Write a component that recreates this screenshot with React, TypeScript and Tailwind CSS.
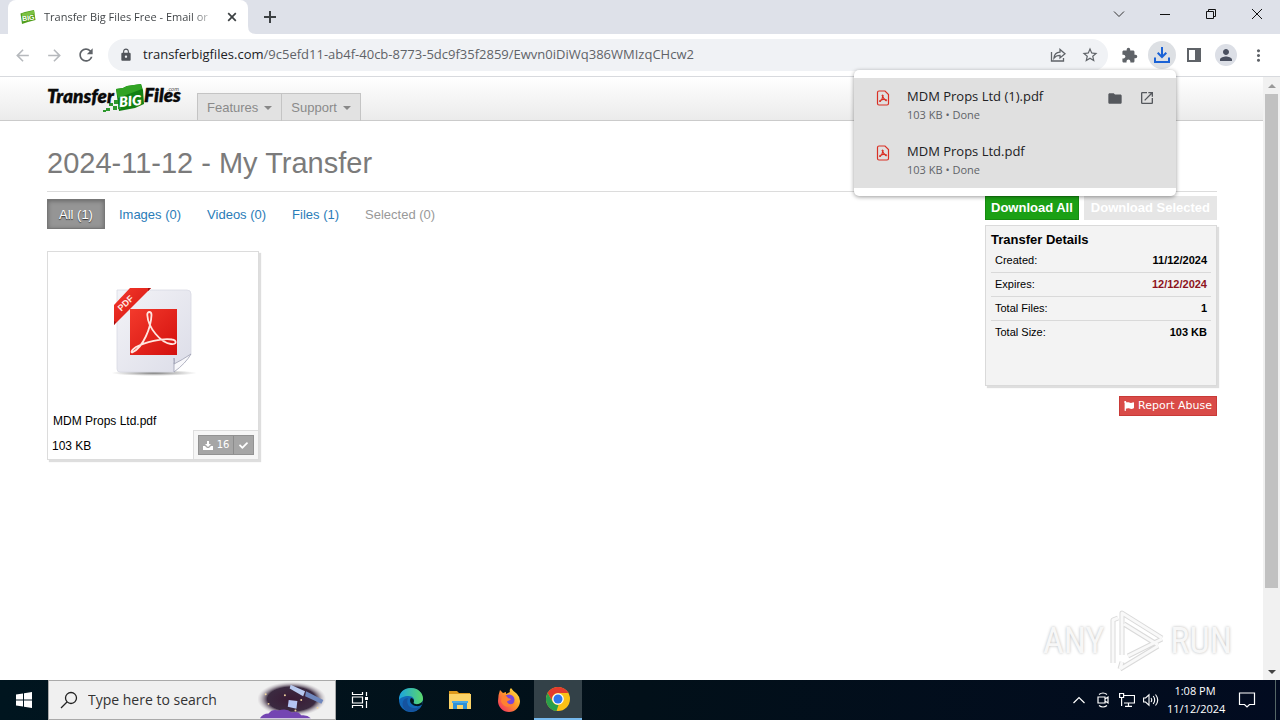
import type { ReactNode } from 'react';
import { FaCheck, FaFlag } from 'react-icons/fa';
import {
  MdArrowBack,
  MdArrowForward,
  MdExtension,
  MdFolder,
  MdLock,
  MdMoreVert,
  MdOpenInNew,
  MdPerson,
  MdRefresh,
  MdStarBorder,
} from 'react-icons/md';

const ui = "font-['Open_Sans','Noto_Sans',sans-serif]";

function IconButton({ label, children, className = '' }: { label: string; children: ReactNode; className?: string }) {
  return (
    <button type="button" aria-label={label} className={`flex shrink-0 items-center justify-center ${className}`}>
      {children}
    </button>
  );
}

function BigBadge() {
  return (
    <svg viewBox="0 0 16 16" className="size-4 shrink-0" aria-hidden="true">
      <path d="M0.500 4.500 L5 3 L14 1 L15.500 11 L8 13 L2 15 Z" fill="#4f9e1c" />
      <path d="M2 4.500 L14 1.500 L14.600 5 L2 8 Z" fill="#7cc142" />
      <text x="2" y="11.500" fontSize="7" fontWeight="700" fill="#fff" fontFamily="Liberation Sans, sans-serif" transform="rotate(-8 8 9)">BIG</text>
    </svg>
  );
}

function TabStrip() {
  return (
    <div className="flex h-[34px] shrink-0 items-end bg-[#dee1e9]">
      <div className="ml-2 flex h-[34px] w-60 items-center rounded-t-lg bg-white pr-2 pl-3">
        <BigBadge />
        <span className="ml-2 bg-linear-to-r from-[#3c4043] from-90% to-[#3c404355] bg-clip-text text-[11px] whitespace-nowrap text-transparent">
          Transfer Big Files Free - Email or
        </span>
        <IconButton label="Close tab" className="ml-auto size-4">
          <svg viewBox="0 0 16 16" className="size-4" stroke="#3c4043" strokeWidth="1.7"><path d="M4.2 4.2l7.6 7.6M11.8 4.2l-7.6 7.6" /></svg>
        </IconButton>
      </div>
      <svg viewBox="0 0 8 8" className="size-2" aria-hidden="true"><path d="M0 0Q0 8 8 8H0Z" fill="#fff" /></svg>
      <IconButton label="New tab" className="ml-1 h-[34px] w-[20px]">
        <svg viewBox="0 0 16 16" className="size-4" stroke="#3c4043" strokeWidth="2"><path d="M8 2v12M2 8h12" /></svg>
      </IconButton>
      <div className="ml-auto flex h-[34px] items-start">
        <IconButton label="Search tabs" className="h-7 w-[46px]">
          <svg viewBox="0 0 12 12" className="size-3" fill="none" stroke="#333"><path d="M1 3.5l5 5 5-5" /></svg>
        </IconButton>
        <IconButton label="Minimize" className="h-7 w-[46px]">
          <svg viewBox="0 0 12 12" className="size-3" stroke="#111"><path d="M1 6.500h10" /></svg>
        </IconButton>
        <IconButton label="Restore" className="h-7 w-[46px]">
          <svg viewBox="0 0 12 12" className="size-3" fill="none" stroke="#111"><path d="M1.500 3.500h7v7h-7zM3.500 3V1.500h7v7H9" /></svg>
        </IconButton>
        <IconButton label="Close" className="h-7 w-[46px]">
          <svg viewBox="0 0 12 12" className="size-3" stroke="#111"><path d="M1 1l10 10M11 1L1 11" /></svg>
        </IconButton>
      </div>
    </div>
  );
}

function Toolbar() {
  return (
    <div className="flex h-[43px] shrink-0 items-center border-b border-[#d8dade] bg-white text-[#5f6368]">
      <div className="flex items-center gap-3 pl-3">
        <IconButton label="Back" className="size-5 text-[#b6b9bd]"><MdArrowBack size={19} /></IconButton>
        <IconButton label="Forward" className="size-5 text-[#b6b9bd]"><MdArrowForward size={19} /></IconButton>
        <IconButton label="Reload" className="size-5"><MdRefresh size={20} /></IconButton>
      </div>
      <div className="ml-3 flex h-8 grow items-center rounded-full bg-[#f0f2f5] pr-2 pl-[11px]">
        <MdLock size={14} className="mr-[10px] shrink-0 text-[#50545a]" />
        <div role="textbox" aria-label="Address" className="grow text-[13px] whitespace-nowrap text-[#5f6368]">
          <span className="text-[#202124]">transferbigfiles.com</span>/9c5efd11-ab4f-40cb-8773-5dc9f35f2859/Ewvn0iDiWq386WMIzqCHcw2
        </div>
        <IconButton label="Share" className="mr-3 size-5">
          <svg viewBox="0 0 16 16" className="size-4" fill="none" stroke="#5f6368" strokeWidth="1.3">
            <path d="M1.500 5v9h12v-3M4 11c.3-4 2.500-5.700 6-5.900V2.500L15 6.800l-5 4.100V8.300C7.300 8.300 5.500 9 4 11z" />
          </svg>
        </IconButton>
        <IconButton label="Bookmark this tab" className="size-5"><MdStarBorder size={18} /></IconButton>
      </div>
      <div className="flex items-center pr-3 pl-3">
        <IconButton label="Extensions" className="size-[18px]"><MdExtension size={17} /></IconButton>
        <IconButton label="Downloads" className="ml-[10px] size-7 rounded-full bg-[#dde0e4]">
          <svg viewBox="0 0 18 18" className="size-[18px]" fill="none" stroke="#1a62d6" strokeWidth="2">
            <path d="M9 1v9.500M4.700 6.700L9 11l4.300-4.300M2 11.500V16h14v-4.500" />
          </svg>
        </IconButton>
        <IconButton label="Side panel" className="ml-[9px] size-[18px]">
          <svg viewBox="0 0 16 16" className="size-4"><path d="M1 1h14v14H1zM3 3v10h6V3z" fill="#5f6368" fillRule="evenodd" /></svg>
        </IconButton>
        <IconButton label="Profile" className="ml-3 size-[22px] rounded-full bg-[#dcdfe6] text-[#4a5060]"><MdPerson size={18} /></IconButton>
        <IconButton label="Menu" className="ml-[11px] size-5"><MdMoreVert size={19} /></IconButton>
      </div>
    </div>
  );
}

function PdfGlyph() {
  return (
    <svg viewBox="0 0 16 16" className="size-4 shrink-0" fill="none" stroke="#d93025" aria-hidden="true">
      <path d="M2.500 2.500a1.500 1.500 0 0 1 1.500-1.500h6l3.500 3.500v9A1.500 1.500 0 0 1 12 15H4a1.500 1.500 0 0 1-1.500-1.500z" strokeWidth="1.200" />
      <path d="M7.500 5.500C8 8 9 9.500 11.300 10.600M7.600 5.300C7.800 8 6.500 10.500 4.700 11.500M5.500 10.300C7.500 9.300 9.500 9.200 11.300 10" strokeWidth="1.200" />
      <circle cx="7.600" cy="5.600" r=".6" />
      <circle cx="5" cy="11.100" r=".6" />
      <circle cx="11.100" cy="10.300" r=".6" />
    </svg>
  );
}

function DownloadRow({ name, actions = false }: { name: string; actions?: boolean }) {
  return (
    <li className="flex h-[55px] items-start pt-[9px] pr-[21px] pl-[21px]">
      <span className="mt-[3px]"><PdfGlyph /></span>
      <div className="ml-4 grow">
        <p className="text-[13px] leading-[18px] text-[#202124]">{name}</p>
        <p className="text-[11px] leading-5 text-[#5f6368]">103 KB • Done</p>
      </div>
      {actions && (
        <div className="mt-[3px] flex gap-4 text-[#55585d]">
          <IconButton label="Show in folder" className="size-4"><MdFolder size={17} /></IconButton>
          <IconButton label="Open file" className="size-4"><MdOpenInNew size={16} /></IconButton>
        </div>
      )}
    </li>
  );
}

function DownloadsPopup() {
  return (
    <div className="absolute top-[70px] right-[104px] z-10 w-[322px] rounded-[5px] bg-white py-2 shadow-[0_1px_4px_rgba(0,0,0,0.4)]">
      <ul className="bg-[#e0e0e0]">
        <DownloadRow name="MDM Props Ltd (1).pdf" actions />
        <DownloadRow name="MDM Props Ltd.pdf" />
      </ul>
    </div>
  );
}

function SiteLogo() {
  return (
    <svg viewBox="0 0 136 32" className="h-8 w-[136px]" role="img" aria-label="TransferBigFiles.com">
      <path d="M69 9L76 8 80 6 94 4 96 10 97 24 88 28 72 31z" fill="#128012" />
      <path d="M69 9L76 8 80 6 94 4 95 9 71 18z" fill="#31a324" />
      <path d="M62 23h4v3h-4zM66 26h4v4h-4zM59 28h4v3h-4zM56 30h3v2h-3zM67 20h4v4h-4zM71 25h3v4h-3z" fill="#2d982d" />
      <g fontFamily="Lato, sans-serif" fontStyle="italic" fontWeight="800">
        <text x="0" y="23" fontSize="19" fill="#0b0b0b" stroke="#0b0b0b" strokeWidth=".3">Transfer</text>
        <text x="72" y="26" fontSize="14" fill="#fff" transform="rotate(-5 83 20)">BIG</text>
        <text x="97" y="22" fontSize="19" fill="#0b0b0b" stroke="#0b0b0b" strokeWidth=".3">Files</text>
        <text x="120" y="11" fontSize="6" fontWeight="400" fill="#555">.com</text>
      </g>
    </svg>
  );
}

function NavItem({ label }: { label: string }) {
  return (
    <button type="button" className="flex h-[27px] items-center gap-[6px] border-r border-[#c4c4c4] px-[9px] text-[13px] text-[#8a8a8a]">
      {label}
      <svg viewBox="0 0 8 4" className="h-1 w-2" aria-hidden="true"><path d="M0 0h8L4 4z" fill="#888" /></svg>
    </button>
  );
}

function PdfArtwork() {
  return (
    <svg viewBox="0 0 90 94" className="h-[94px] w-[90px]" role="img" aria-label="PDF document">
      <defs>
        <linearGradient id="sheet" x1="0" y1="0" x2="1" y2="1"><stop offset="0" stopColor="#f3f3f7" /><stop offset="1" stopColor="#dcdde8" /></linearGradient>
        <linearGradient id="red" x1="0" y1="0" x2="1" y2="1"><stop offset="0" stopColor="#f33a2c" /><stop offset="1" stopColor="#d3100e" /></linearGradient>
        <radialGradient id="shade"><stop offset="0" stopColor="#555" stopOpacity=".8" /><stop offset="1" stopColor="#777" stopOpacity="0" /></radialGradient>
      </defs>
      <ellipse cx="46" cy="87" rx="43" ry="3" fill="url(#shade)" />
      <path d="M9 4h70q4 0 4 4v60L66 86H12q-3 0-3-3z" fill="url(#sheet)" stroke="#d8d9e3" strokeWidth=".8" />
      <path d="M66 86V72q1 4 0 6 8-4 17-10-5 9-17 18z" fill="#f8f8fb" stroke="#9da0b2" strokeWidth=".8" />
      <rect x="22" y="23" width="47" height="46" fill="url(#red)" />
      <path d="M25 66C35 61 43 42 43.500 29c0-4-4.500-4-4.200 0C40 42 53 57 63 58c6 1 6-4 1-4.500C54 52 37 56 28 61c-6 4-5 6.500-3 5z" fill="none" stroke="#ffe6e0" strokeWidth="1.800" />
      <path d="M22 2h21L6 39V19z" fill="url(#red)" />
      <path d="M43 2l-3 3V2zM6 39v-4l2 1z" fill="#9f1010" />
      <text x="-1" y="0" fontFamily="Liberation Sans, sans-serif" fontSize="9" fontWeight="700" fill="#ffe9e4" transform="translate(14 25) rotate(-44)">PDF</text>
    </svg>
  );
}

function FileCard() {
  return (
    <article className="flex h-[209px] w-[212px] flex-col border border-[#dcdcdc] bg-white text-xs text-black shadow-[2px_2px_1px_#dedede]">
      <div className="flex grow justify-center pt-[34px]"><PdfArtwork /></div>
      <p className="px-[5px] pb-px leading-4">MDM Props Ltd.pdf</p>
      <div className="flex items-center justify-between pl-1">
        <span className="pt-[2px]">103 KB</span>
        <div className="border-t border-l border-[#dedede] bg-[#f6f6f6] p-1">
          <div className="flex h-5 border border-[#929292] bg-[#a6a6a6] font-['DejaVu_Sans',sans-serif] text-[10px] text-white">
            <button type="button" aria-label="Download, 16 downloads" className="flex w-[35px] items-center justify-center gap-1 border-r border-[#8c8c8c]">
              <svg viewBox="0 0 10 9" className="h-[9px] w-[10px]" fill="#fff"><path d="M4 0h2v3h2L5 6 2 3h2zM0 5h2l2 2h2l2-2h2v4H0z" /></svg>
              16
            </button>
            <button type="button" aria-label="Select file" className="flex w-[19px] items-center justify-center"><FaCheck size={9} /></button>
          </div>
        </div>
      </div>
    </article>
  );
}

const details = [
  { label: 'Created:', value: '11/12/2024', tone: 'text-black' },
  { label: 'Expires:', value: '12/12/2024', tone: 'text-[#8d1420]' },
  { label: 'Total Files:', value: '1', tone: 'text-black' },
  { label: 'Total Size:', value: '103 KB', tone: 'text-black' },
];

function TransferSidebar() {
  return (
    <aside className="flex w-[232px] shrink-0 flex-col pt-1">
      <div className="flex justify-between text-[13px] font-bold text-white">
        <button type="button" className="h-6 border border-[#168a10] bg-[#1ba015] px-[5px]">Download All</button>
        <button type="button" disabled className="h-6 bg-[#e6e6e6] px-[7px]">Download Selected</button>
      </div>
      <section className="mt-[5px] h-[161px] border border-[#dadada] bg-[#f3f3f3] px-[5px] pt-[6px] text-black shadow-[2px_2px_1px_#dedede]">
        <h2 className="text-[13px] leading-4 font-bold">Transfer Details</h2>
        <table className="w-full text-[11px]">
          <tbody>
            {details.map((row) => (
              <tr key={row.label} className="h-6 border-b border-[#d9d9d9] last:border-0">
                <th scope="row" className="px-1 py-0 text-left font-normal">{row.label}</th>
                <td className={`px-1 py-0 text-right font-bold ${row.tone}`}>{row.value}</td>
              </tr>
            ))}
          </tbody>
        </table>
      </section>
      <button type="button" className="mt-[10px] flex h-5 items-center gap-1 self-end border border-[#c93a37] bg-[#d94b48] px-1 font-['DejaVu_Sans',sans-serif] text-[11px] text-white">
        <FaFlag size={10} />
        Report Abuse
      </button>
    </aside>
  );
}

const filters = [
  { label: 'Images (0)', tone: 'text-[#2a7cb8]' },
  { label: 'Videos (0)', tone: 'text-[#2a7cb8]' },
  { label: 'Files (1)', tone: 'text-[#2a7cb8]' },
  { label: 'Selected (0)', tone: 'text-[#999]' },
];

function Watermark() {
  return (
    <div className="absolute right-[31px] bottom-[7px] flex items-center gap-[3px] font-['Roboto_Condensed','Liberation_Sans_Narrow','Liberation_Sans',sans-serif] text-[36px] leading-[64px] text-[#f7f7f7] [text-shadow:0_0_3px_#b8b8b8]">
      <span>ANY</span>
      <svg viewBox="0 0 60 64" className="h-16 w-[60px]" fill="none" strokeLinejoin="round" aria-hidden="true">
        <g stroke="#dadada" strokeWidth="5"><path d="M15 46V4l40 25M6 54V11l5-2M21 47l34-17M13 60l38-23M13 60l2-7M17 15l34 21" /></g>
        <g stroke="#f9f9f9" strokeWidth="3"><path d="M15 46V4l40 25M6 54V11l5-2M21 47l34-17M13 60l38-23M13 60l2-7M17 15l34 21" /></g>
      </svg>
      <span>RUN</span>
    </div>
  );
}

function WebPage() {
  return (
    <div className="relative flex min-h-0 grow flex-col bg-white font-['Liberation_Sans',Arial,sans-serif]">
      <header className="flex h-11 shrink-0 items-end border-b border-[#cbcbcb] bg-linear-to-b from-white to-[#ebebeb] pl-[47px]">
        <a href="#home" className="mb-2 mr-[14px]"><SiteLogo /></a>
        <nav className="flex h-[27px] border-t border-l border-[#c4c4c4] bg-[#e2e2e2]">
          <NavItem label="Features" />
          <NavItem label="Support" />
        </nav>
      </header>
      <main className="pr-[46px] pl-[47px]">
        <h1 className="border-b border-[#dcdcdc] pt-6 pb-[10px] text-[29px] leading-9 text-[#7b7b7b]">2024-11-12 - My Transfer</h1>
        <div className="flex justify-between">
          <div>
            <nav className="flex h-[37px] gap-[2px] pt-[7px] text-[13px]">
              <a href="#all" className="h-[30px] border border-[#777] bg-[#959595] px-[11px] leading-[30px] text-white shadow-[inset_0_1px_4px_#666] [text-shadow:0_1px_1px_#333]">All (1)</a>
              {filters.map((item) => (
                <a key={item.label} href="#files" className={`px-3 leading-8 ${item.tone}`}>{item.label}</a>
              ))}
            </nav>
            <div className="mt-[22px]"><FileCard /></div>
          </div>
          <TransferSidebar />
        </div>
      </main>
      <Watermark />
    </div>
  );
}

function ScrollTrack() {
  return (
    <div className="flex w-[17px] shrink-0 flex-col items-center justify-between bg-[#f1f1f1]" aria-hidden="true">
      <div className="flex h-[17px] items-center"><svg viewBox="0 0 8 4" className="h-1 w-2"><path d="M0 4h8L4 0z" fill="#999" /></svg></div>
      <div className="mb-[75px] w-[13px] grow bg-[#c1c1c1]" />
      <div className="flex h-[17px] items-center"><svg viewBox="0 0 8 4" className="h-1 w-2"><path d="M0 0h8L4 4z" fill="#444" /></svg></div>
    </div>
  );
}

function SearchArt() {
  return (
    <svg viewBox="0 0 76 38" className="h-[38px] w-[76px]" aria-hidden="true">
      <defs>
        <radialGradient id="night"><stop offset="0" stopColor="#3a1a35" /><stop offset=".7" stopColor="#3b2a40" /><stop offset="1" stopColor="#bbb3bb" stopOpacity="0" /></radialGradient>
      </defs>
      <ellipse cx="35" cy="18" rx="36" ry="18" fill="url(#night)" />
      <path d="M34 3l15 7-2 5-14-8z" fill="#b8c9ef" />
      <path d="M50 10l18 9-2 4-17-8z" fill="#6f87bd" />
      <path d="M32 19l9 1-1 8-9-2z" fill="#b4c3f4" />
      <path d="M2 38q3-5 9-5 4-5 10-3 9-3 14 2 7-2 10 3 6-1 10 3z" fill="#7445b2" />
      <g fill="#f5d7a0"><circle cx="8" cy="13" r="1" /><circle cx="28" cy="14" r="1" /><circle cx="39" cy="30" r="1" /><circle cx="11" cy="23" r="1" /><circle cx="62" cy="27" r="1" /><circle cx="45" cy="19" r="1" /></g>
    </svg>
  );
}

function EdgeIcon() {
  return (
    <svg viewBox="0 0 24 24" className="size-6" aria-hidden="true">
      <defs>
        <linearGradient id="edgeTop" x1="0" x2="1"><stop offset="0" stopColor="#1ba3e0" /><stop offset="1" stopColor="#5bd86a" /></linearGradient>
      </defs>
      <circle cx="12" cy="12" r="12" fill="#1268b8" />
      <path d="M0 12C0 4 5 0 12 0c7 0 12 5 12 10.500 0 4-3 6-6.500 6-3 0-4-1-3-2.500 2-3-1-6-5-6C5 8 1 10 0 12z" fill="url(#edgeTop)" />
      <path d="M9 10c-3 7 3 13 13 8.500-4 6-13 7-17 2C2 16 4 10 9 10z" fill="#15539f" />
      <path d="M12 10c-2 2-1 7 5 8 3 .5 5-.5 6-1.500l1-4c-2 4-8 4.500-9.500 2.500C15.500 13 15 10.500 12 10z" fill="#03151e" />
    </svg>
  );
}

function FolderIcon() {
  return (
    <svg viewBox="0 0 24 24" className="size-6" aria-hidden="true">
      <path d="M1 3h8l2 2h11v5H1z" fill="#dd9a1d" />
      <path d="M1 6h22v15H1z" fill="#fbd367" />
      <path d="M5 13h14v8h-4v-4H9v4H5z" fill="#2f91d6" />
      <path d="M4 13h16v2H4z" fill="#4aa9e6" />
    </svg>
  );
}

function FirefoxIcon() {
  return (
    <svg viewBox="0 0 24 24" className="size-6" aria-hidden="true">
      <defs>
        <linearGradient id="fox" x1="1" y1="0" x2="0" y2="1"><stop offset="0" stopColor="#fff04a" /><stop offset=".45" stopColor="#ff9a27" /><stop offset="1" stopColor="#f0206c" /></linearGradient>
      </defs>
      <path d="M3 2l3 3 3-1v2l4-2q-1-2 1-4 2 3 5 5l1 1q3 3 3 7a11 11 0 1 1-22 0q0-6 2-11z" fill="url(#fox)" />
      <circle cx="12" cy="12" r="5.500" fill="#7946d8" />
      <path d="M5 8c3-1 5 0 6 2l3 1c-1 2-3 1-4 3 2 3 5 3 8 0-1 6-12 7-14-1z" fill="#ff8130" />
    </svg>
  );
}

function ChromeIcon() {
  return (
    <svg viewBox="0 0 24 24" className="size-6" aria-hidden="true">
      <circle cx="12" cy="12" r="12" fill="#fbc116" />
      <path d="M1.600 6A12 12 0 0 1 22.400 6H12a6 6 0 0 0-5.200 9z" fill="#e33b2e" />
      <path d="M1.600 6l5.200 9A6 6 0 0 0 12.500 18L10.500 24A12 12 0 0 1 1.600 6z" fill="#2a9f4b" />
      <circle cx="12" cy="12" r="5.800" fill="#fff" />
      <circle cx="12" cy="12" r="4.500" fill="#2f76ec" />
    </svg>
  );
}

function Taskbar() {
  return (
    <footer className="flex h-10 shrink-0 items-stretch bg-linear-to-r from-[#00151f] via-[#021019] to-[#020b20] text-white">
      <IconButton label="Start" className="w-12">
        <svg viewBox="0 0 16 16" className="size-4" fill="#fff"><path d="M0 2.500l7-1v6H0zM8 1.300L16 0v7.500H8zM0 8.500h7v6l-7-1zM8 8.500h8V16l-8-1.300z" /></svg>
      </IconButton>
      <label className="flex w-72 items-center border border-[#aaa] bg-[#f0f0f0] pr-1 pl-[11px]">
        <svg viewBox="0 0 18 18" className="size-[18px] shrink-0" fill="none" stroke="#222" strokeWidth="1.300" aria-hidden="true"><circle cx="11" cy="7" r="5.500" /><path d="M7 11l-6 6" /></svg>
        <input type="text" aria-label="Type here to search" placeholder="Type here to search" className="ml-[10px] min-w-0 grow bg-transparent text-sm outline-none placeholder:text-[#333]" />
        <SearchArt />
      </label>
      <IconButton label="Task view" className="w-12">
        <svg viewBox="0 0 18 16" className="h-4 w-[18px]" fill="none" stroke="#fff" strokeWidth="1.200"><path d="M1.500 0v2.500h10V0M1.500 5h10v6h-10zM1.500 16v-2.500h10V16M15.500 0v4M15.500 9v7" /><path d="M14 5h3v3h-3z" fill="#fff" stroke="none" /></svg>
      </IconButton>
      <IconButton label="Microsoft Edge" className="ml-[3px] w-12"><EdgeIcon /></IconButton>
      <IconButton label="File Explorer" className="ml-px w-12"><FolderIcon /></IconButton>
      <IconButton label="Firefox" className="ml-px w-12"><FirefoxIcon /></IconButton>
      <IconButton label="Google Chrome" className="ml-px w-12 border-b-2 border-[#76b9ed] bg-[#334148]"><ChromeIcon /></IconButton>
      <div className="ml-auto flex items-center gap-2">
        <IconButton label="Show hidden icons" className="size-4">
          <svg viewBox="0 0 12 12" className="size-3" fill="none" stroke="#fff" strokeWidth="1.200"><path d="M.5 9L6 3.500 11.500 9" /></svg>
        </IconButton>
        <IconButton label="Camera in use" className="size-4">
          <svg viewBox="0 0 16 16" className="size-4" fill="none" stroke="#fff" strokeWidth="1.200"><path d="M3 5h7v6H3zM10 7l3-2v6l-3-2M4 2.500q4-3 8 0M4 13.500q4 3 8 0" /></svg>
        </IconButton>
        <IconButton label="Network" className="size-4">
          <svg viewBox="0 0 16 16" className="size-4" fill="none" stroke="#fff" strokeWidth="1.200"><path d="M5 3.500h10.500v7.500H5M.6 1.500h4v4h-4zM2.600 5.500V14M6 14.400h7M9.500 11v3" /></svg>
        </IconButton>
        <IconButton label="Volume" className="size-4">
          <svg viewBox="0 0 16 16" className="size-4" fill="none" stroke="#fff" strokeWidth="1.100"><path d="M.6 6h2L6 2.800v10.400L2.600 10h-2zM8 6q1.500 2 0 4M10.200 4q3 4 0 8M12.500 2.500q4.500 5.500 0 11" /></svg>
        </IconButton>
        <div className="w-[56px] text-center text-[11px] leading-[18px] whitespace-nowrap">
          <p>1:08 PM</p>
          <p>11/12/2024</p>
        </div>
        <IconButton label="Notifications" className="ml-1 size-6">
          <svg viewBox="0 0 18 18" className="size-[18px]" fill="none" stroke="#fff" strokeWidth="1.200"><path d="M1.500 2h15v11.500h-5L9 16l-2.500-2.500h-5z" /></svg>
        </IconButton>
        <div className="ml-2 h-10 w-[5px] border-l border-[#566]" />
      </div>
    </footer>
  );
}

export default function App() {
  return (
    <div className={`relative flex h-screen flex-col overflow-hidden ${ui}`}>
      <TabStrip />
      <Toolbar />
      <div className="flex min-h-0 grow">
        <WebPage />
        <ScrollTrack />
      </div>
      <Taskbar />
      <DownloadsPopup />
    </div>
  );
}
